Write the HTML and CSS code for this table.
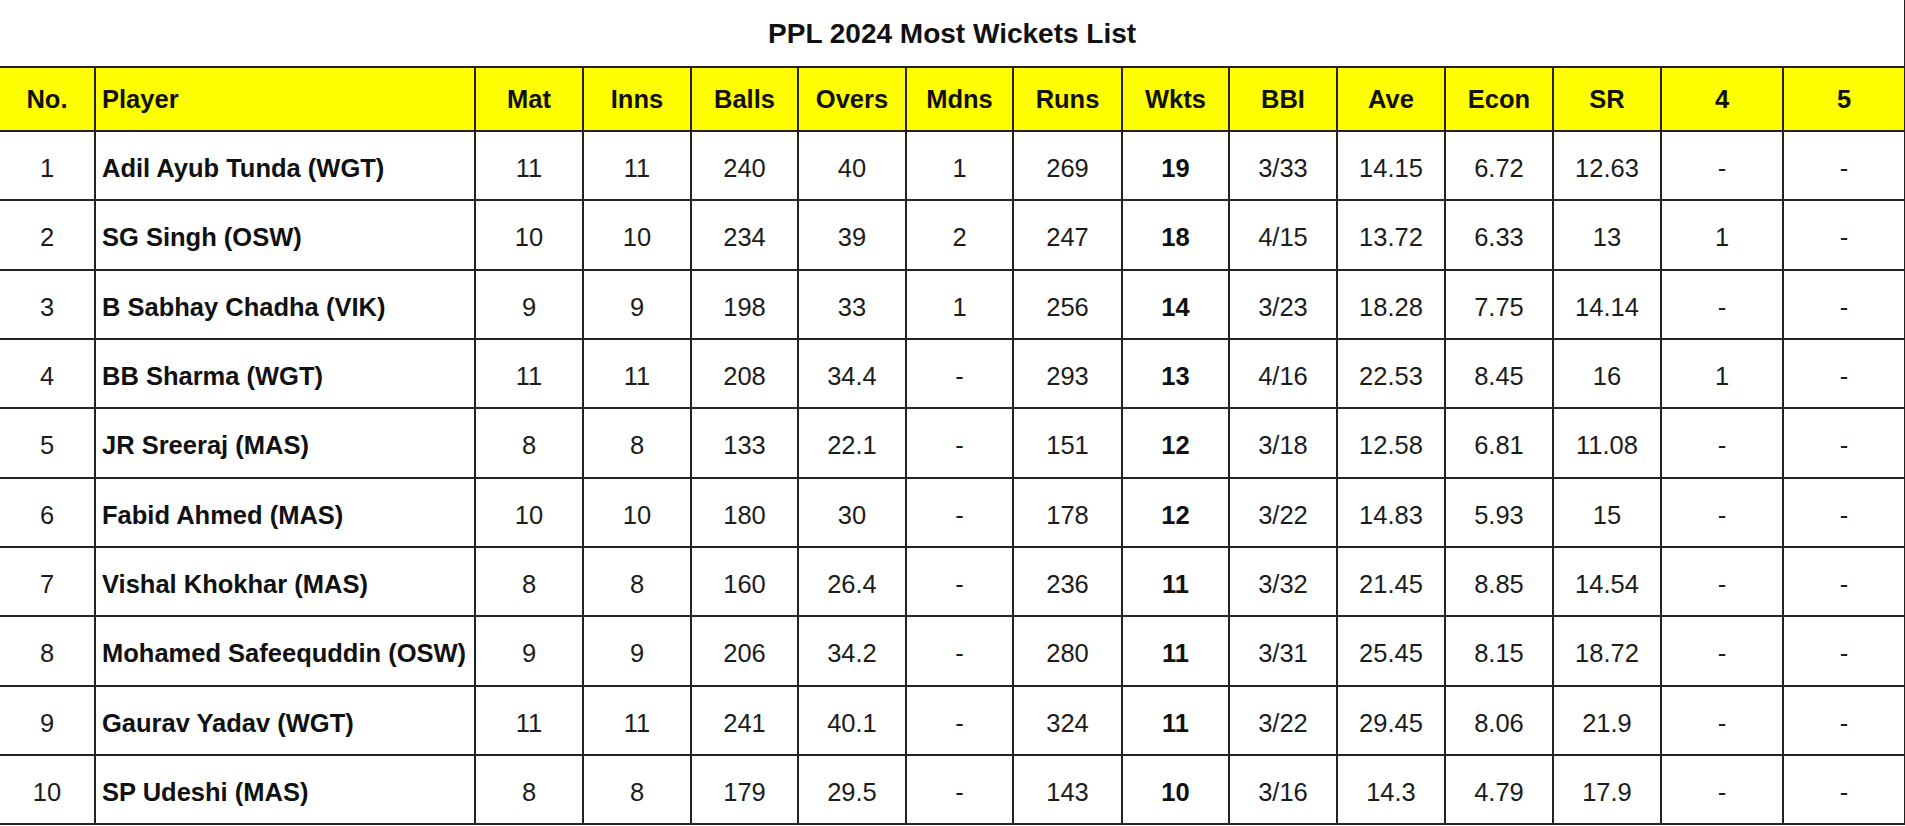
FILE: index.html
```html
<!DOCTYPE html>
<html lang="en">
<head>
<meta charset="utf-8">
<title>PPL 2024 Most Wickets List</title>
<link rel="stylesheet" href="styles.css">
</head>
<body>
<table class="stats">
  <colgroup>
    <col class="c-no"><col class="c-player">
    <col class="c-108"><col class="c-108"><col class="c-107"><col class="c-108"><col class="c-107">
    <col class="c-109"><col class="c-107"><col class="c-108"><col class="c-108"><col class="c-108"><col class="c-108">
    <col class="c-122"><col class="c-122">
  </colgroup>
  <thead>
    <tr class="title-row"><th colspan="15" class="title">PPL 2024 Most Wickets List</th></tr>
    <tr class="head-row">
      <th>No.</th><th class="left">Player</th><th>Mat</th><th>Inns</th><th>Balls</th><th>Overs</th><th>Mdns</th><th>Runs</th><th>Wkts</th><th>BBI</th><th>Ave</th><th>Econ</th><th>SR</th><th>4</th><th>5</th>
    </tr>
  </thead>
  <tbody>
    <tr class="r69"><td>1</td><td class="name">Adil Ayub Tunda (WGT)</td><td>11</td><td>11</td><td>240</td><td>40</td><td>1</td><td>269</td><td class="b">19</td><td>3/33</td><td>14.15</td><td>6.72</td><td>12.63</td><td>-</td><td>-</td></tr>
    <tr class="r70"><td>2</td><td class="name">SG Singh (OSW)</td><td>10</td><td>10</td><td>234</td><td>39</td><td>2</td><td>247</td><td class="b">18</td><td>4/15</td><td>13.72</td><td>6.33</td><td>13</td><td>1</td><td>-</td></tr>
    <tr class="r69"><td>3</td><td class="name">B Sabhay Chadha (VIK)</td><td>9</td><td>9</td><td>198</td><td>33</td><td>1</td><td>256</td><td class="b">14</td><td>3/23</td><td>18.28</td><td>7.75</td><td>14.14</td><td>-</td><td>-</td></tr>
    <tr class="r69"><td>4</td><td class="name">BB Sharma (WGT)</td><td>11</td><td>11</td><td>208</td><td>34.4</td><td>-</td><td>293</td><td class="b">13</td><td>4/16</td><td>22.53</td><td>8.45</td><td>16</td><td>1</td><td>-</td></tr>
    <tr class="r70"><td>5</td><td class="name">JR Sreeraj (MAS)</td><td>8</td><td>8</td><td>133</td><td>22.1</td><td>-</td><td>151</td><td class="b">12</td><td>3/18</td><td>12.58</td><td>6.81</td><td>11.08</td><td>-</td><td>-</td></tr>
    <tr class="r69"><td>6</td><td class="name">Fabid Ahmed (MAS)</td><td>10</td><td>10</td><td>180</td><td>30</td><td>-</td><td>178</td><td class="b">12</td><td>3/22</td><td>14.83</td><td>5.93</td><td>15</td><td>-</td><td>-</td></tr>
    <tr class="r69"><td>7</td><td class="name">Vishal Khokhar (MAS)</td><td>8</td><td>8</td><td>160</td><td>26.4</td><td>-</td><td>236</td><td class="b">11</td><td>3/32</td><td>21.45</td><td>8.85</td><td>14.54</td><td>-</td><td>-</td></tr>
    <tr class="r70"><td>8</td><td class="name">Mohamed Safeequddin (OSW)</td><td>9</td><td>9</td><td>206</td><td>34.2</td><td>-</td><td>280</td><td class="b">11</td><td>3/31</td><td>25.45</td><td>8.15</td><td>18.72</td><td>-</td><td>-</td></tr>
    <tr class="r69"><td>9</td><td class="name">Gaurav Yadav (WGT)</td><td>11</td><td>11</td><td>241</td><td>40.1</td><td>-</td><td>324</td><td class="b">11</td><td>3/22</td><td>29.45</td><td>8.06</td><td>21.9</td><td>-</td><td>-</td></tr>
    <tr class="r69"><td>10</td><td class="name">SP Udeshi (MAS)</td><td>8</td><td>8</td><td>179</td><td>29.5</td><td>-</td><td>143</td><td class="b">10</td><td>3/16</td><td>14.3</td><td>4.79</td><td>17.9</td><td>-</td><td>-</td></tr>
  </tbody>
</table>
</body>
</html>
```

FILE: styles.css
```css
html, body {
  margin: 0;
  padding: 0;
  background: #ffffff;
}

body {
  font-family: "Liberation Sans", Arial, sans-serif;
  color: #1c1c1c;
  overflow: hidden;
}

.stats {
  width: 1905px;
  table-layout: fixed;
  border-collapse: collapse;
  font-size: 25.5px;
}

.c-no { width: 95px; }
.c-player { width: 380px; }
.c-107 { width: 107px; }
.c-108 { width: 108px; }
.c-109 { width: 109px; }
.c-122 { width: 122px; }

.stats th,
.stats td {
  padding: 0;
  text-align: center;
  vertical-align: middle;
  border: 2px solid #222222;
  white-space: nowrap;
}

.stats td {
  padding-top: 5px;
}

.title-row {
  height: 67px;
}

.stats th.title {
  border-top: none;
  border-left: none;
  border-right: 2px solid #222222;
  background: #ffffff;
  color: #111111;
  font-weight: bold;
  font-size: 28px;
  padding-top: 2px;
}

.head-row {
  height: 64px;
  background: #ffff00;
}

.head-row th {
  font-weight: bold;
  color: #111111;
}

.stats th:first-child,
.stats td:first-child {
  border-left: none;
}

.stats th.left,
.stats td.name {
  text-align: left;
  padding-left: 6px;
}

.stats td.name,
.stats td.b {
  font-weight: bold;
  color: #111111;
}

.r69 { height: 69px; }
.r70 { height: 70px; }
```
